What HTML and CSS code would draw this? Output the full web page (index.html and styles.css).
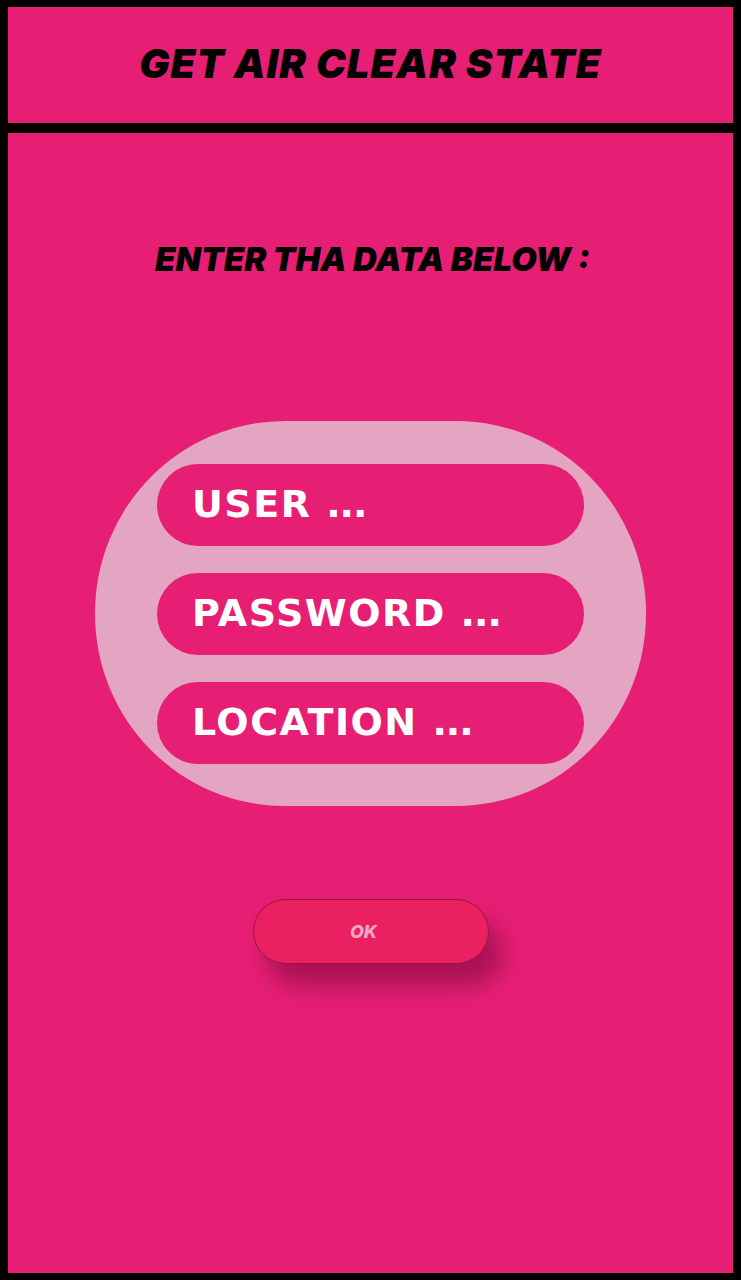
FILE: index.html
```html
<!DOCTYPE html>
<html>
<head>
<meta charset="utf-8">
<link rel="stylesheet" href="styles.css">
</head>
<body>
<div class="frame">
  <header class="header">
    <h1 class="title">GET AIR CLEAR STATE</h1>
  </header>
  <main class="main">
    <h2 class="subtitle">ENTER THA DATA BELOW :</h2>
    <div class="oval">
      <div class="field">USER <span class="dots">...</span></div>
      <div class="field">PASSWORD <span class="dots">...</span></div>
      <div class="field">LOCATION <span class="dots">...</span></div>
    </div>
    <button class="ok">OK</button>
  </main>
</div>
</body>
</html>
```
FILE: styles.css
```css
html, body {
  margin: 0;
  padding: 0;
  background: #000;
  height: 1280px;
  overflow: hidden;
}
.frame {
  box-sizing: border-box;
  height: 1280px;
  padding: 7px 8px 7px 8px;
  display: flex;
  flex-direction: column;
  gap: 10px;
}
.header {
  height: 116px;
  background: #e61f74;
  display: flex;
  align-items: center;
  justify-content: center;
}
.title {
  margin: 0;
  font-family: Inter, "Liberation Sans", sans-serif;
  font-weight: 900;
  font-style: italic;
  font-size: 40px;
  letter-spacing: 1px;
  color: #000;
  transform: translateY(-2px);
}
.main {
  flex: 1;
  background: #e61f74;
  display: flex;
  flex-direction: column;
  align-items: center;
}
.subtitle {
  margin: 106px 0 0 0;
  font-family: Inter, "Liberation Sans", sans-serif;
  font-weight: 900;
  font-style: italic;
  font-size: 33px;
  letter-spacing: 0;
  color: #000;
  transform: translateX(2px);
}
.oval {
  margin-top: 142px;
  width: 551px;
  height: 385px;
  border-radius: 190px / 192px;
  background: #e3a5c1;
  box-sizing: border-box;
  padding-top: 43px;
  display: flex;
  flex-direction: column;
  align-items: center;
  gap: 27px;
}
.field {
  box-sizing: border-box;
  width: 427px;
  height: 82px;
  border-radius: 41px;
  background: #e61f74;
  color: #fff;
  font-family: "DejaVu Sans", "Liberation Sans", sans-serif;
  font-weight: 700;
  font-size: 38px;
  letter-spacing: 1.5px;
  padding: 0 0 2px 35px;
  display: flex;
  align-items: center;
  white-space: pre;
}
.dots {
  letter-spacing: -1px;
}
.ok {
  margin-top: 93px;
  width: 236px;
  height: 65px;
  border-radius: 33px;
  background: #ea2061;
  border: 1.5px solid #9c1345;
  padding: 0 14px 0 0;
  color: #f2a6c6;
  font-family: Inter, "Liberation Sans", sans-serif;
  font-weight: 800;
  font-style: italic;
  font-size: 18px;
  box-shadow: 14px 22px 22px rgba(120, 10, 60, 0.55);
}
```
